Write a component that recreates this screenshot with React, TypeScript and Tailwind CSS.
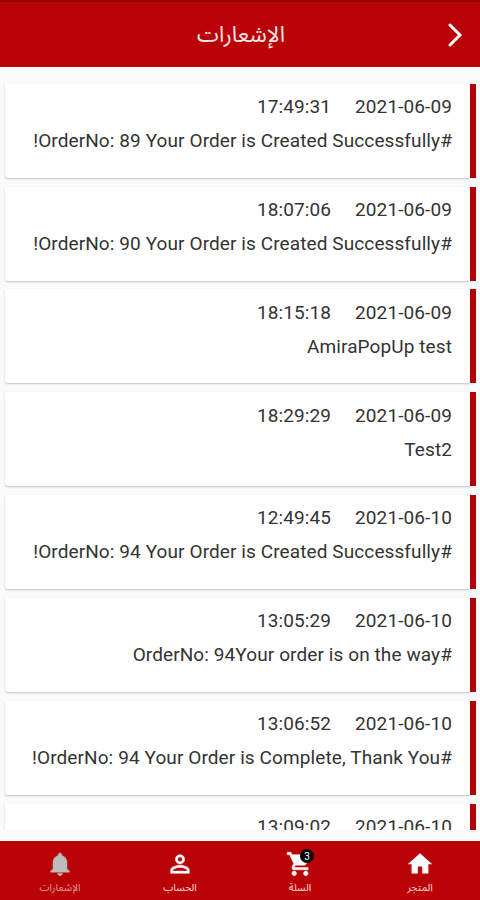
import clsx from 'clsx';

interface Notification {
  date: string;
  time: string;
  message: string;
}

interface Tab {
  label: string;
  icon: string;
  active?: boolean;
  badge?: number;
}

const notifications: Notification[] = [
  { date: '2021-06-09', time: '17:49:31', message: '#OrderNo: 89 Your Order is Created Successfully!' },
  { date: '2021-06-09', time: '18:07:06', message: '#OrderNo: 90 Your Order is Created Successfully!' },
  { date: '2021-06-09', time: '18:15:18', message: 'AmiraPopUp test' },
  { date: '2021-06-09', time: '18:29:29', message: 'Test2' },
  { date: '2021-06-10', time: '12:49:45', message: '#OrderNo: 94 Your Order is Created Successfully!' },
  { date: '2021-06-10', time: '13:05:29', message: '#OrderNo: 94Your order is on the way' },
  { date: '2021-06-10', time: '13:06:52', message: '#OrderNo: 94 Your Order is Complete, Thank You!' },
  { date: '2021-06-10', time: '13:09:02', message: '' },
];

const icons = {
  home: 'M10 20v-6h4v6h5v-8h3L12 3 2 12h3v8z',
  cart: 'M7 18c-1.1 0-1.99.9-1.99 2S5.900 22 7 22s2-.9 2-2-.9-2-2-2zM1 2v2h2l3.600 7.590-1.350 2.450c-.16.28-.25.61-.25.96 0 1.100.9 2 2 2h12v-2H7.420c-.14 0-.25-.11-.25-.25l.03-.12.9-1.630h7.450c.75 0 1.410-.41 1.750-1.030l3.580-6.490A1.003 1.003 0 0 0 20 4H5.210l-.94-2H1zm16 16c-1.100 0-1.990.9-1.990 2s.89 2 1.990 2 2-.9 2-2-.9-2-2-2z',
  person:
    'M12 5.900a2.100 2.100 0 1 1 0 4.200 2.100 2.100 0 0 1 0-4.200m0 9c2.970 0 6.100 1.460 6.100 2.100v1.100H5.900V17c0-.64 3.130-2.100 6.100-2.100M12 4C9.790 4 8 5.790 8 8s1.790 4 4 4 4-1.790 4-4-1.790-4-4-4zm0 9c-2.670 0-8 1.340-8 4v3h16v-3c0-2.660-5.330-4-8-4z',
  bell: 'M12 22c1.100 0 2-.9 2-2h-4c0 1.100.89 2 2 2zm6-6v-5c0-3.070-1.640-5.640-4.500-6.320V4c0-.83-.67-1.500-1.500-1.500s-1.500.67-1.500 1.500v.68C7.630 5.360 6 7.920 6 11v5l-2 2v1h16v-1l-2-2z',
};

const tabs: Tab[] = [
  { label: 'المتجر', icon: icons.home },
  { label: 'السلة', icon: icons.cart, badge: 3 },
  { label: 'الحساب', icon: icons.person },
  { label: 'الإشعارات', icon: icons.bell, active: true },
];

function Header() {
  return (
    <header className="flex h-[67px] shrink-0 items-center border-t-2 border-[#8e0204] bg-[#b90306]">
      <div className="flex w-[50px] justify-center">
        <svg viewBox="0 0 14 24" className="h-6 w-3.5" fill="none" stroke="white" strokeWidth="3" strokeLinecap="round">
          <path d="M2 2 12 12 2 22" />
        </svg>
      </div>
      <h1 className="flex-1 text-center text-[22px] text-[#ffe9e6]">الإشعارات</h1>
      <div className="w-[52px]" />
    </header>
  );
}

function NotificationCard({ date, time, message }: Notification) {
  return (
    <article className="flex h-[94px] shrink-0">
      <div className="w-1.5 shrink-0 bg-[#b20205]" />
      <div className="flex-1 rounded-bl-[3px] bg-white pt-[9px] pr-[18px] text-[19px] tracking-[0.1px] text-[#333] shadow-[0_1px_2px_rgba(0,0,0,0.22)]">
        <div className="flex h-[29px] items-center gap-6">
          <span>{date}</span>
          <span>{time}</span>
        </div>
        <p className="flex h-[39px] items-center whitespace-nowrap">{message}</p>
      </div>
    </article>
  );
}

function TabBar() {
  return (
    <nav className="grid h-[59px] shrink-0 grid-cols-4 bg-[#b90306]">
      {tabs.map(({ label, icon, active, badge }) => (
        <button
          key={label}
          type="button"
          className={clsx('flex flex-col items-center pt-[9px]', active ? 'text-[#bcbcbc]' : 'text-white')}
        >
          <span className="relative">
            <svg viewBox="0 0 24 24" className="size-7" fill="currentColor" stroke="currentColor" strokeWidth="0.4">
              <path d={icon} />
            </svg>
            {badge != null && (
              <span className="absolute -top-px right-0 flex size-[14px] items-center justify-center rounded-full bg-black text-[10px] text-white">
                {badge}
              </span>
            )}
          </span>
          <span className={clsx('text-[10px] leading-5 font-medium', active ? 'text-[#dc8a88]' : 'text-[#f6c3c0]')}>
            {label}
          </span>
        </button>
      ))}
    </nav>
  );
}

export default function App() {
  return (
    <div
      dir="rtl"
      className="flex h-[900px] w-[480px] flex-col overflow-hidden bg-[#fafafa] font-[Roboto,'Noto_Sans_Arabic','DejaVu_Sans',sans-serif]"
    >
      <Header />
      <main className="mb-[11px] flex min-h-0 flex-1 flex-col gap-[8.85px] overflow-hidden pt-[16.8px] pr-1 pl-[5px]">
        {notifications.map((item) => (
          <NotificationCard key={item.time} {...item} />
        ))}
      </main>
      <TabBar />
    </div>
  );
}
